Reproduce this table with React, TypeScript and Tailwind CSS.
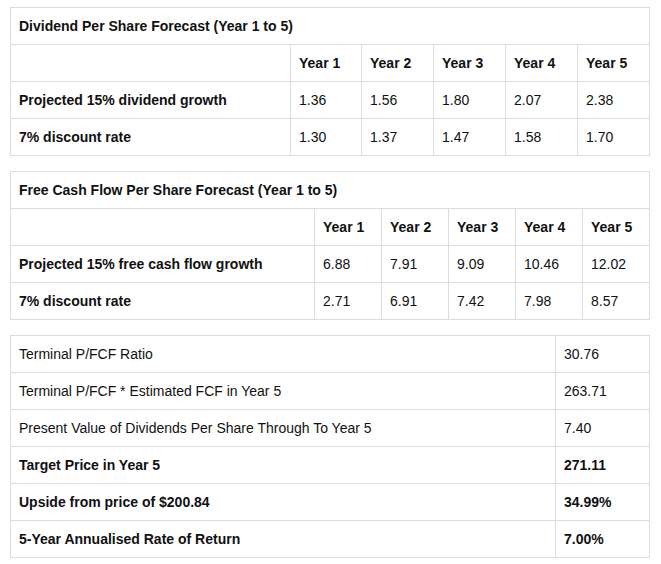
import React from 'react'

const dividendRows = [
  { label: 'Projected 15% dividend growth', values: ['1.36', '1.56', '1.80', '2.07', '2.38'] },
  { label: '7% discount rate', values: ['1.30', '1.37', '1.47', '1.58', '1.70'] },
]

const fcfRows = [
  { label: 'Projected 15% free cash flow growth', values: ['6.88', '7.91', '9.09', '10.46', '12.02'] },
  { label: '7% discount rate', values: ['2.71', '6.91', '7.42', '7.98', '8.57'] },
]

const summaryRows = [
  { label: 'Terminal P/FCF Ratio', value: '30.76', bold: false },
  { label: 'Terminal P/FCF * Estimated FCF in Year 5', value: '263.71', bold: false },
  { label: 'Present Value of Dividends Per Share Through To Year 5', value: '7.40', bold: false },
  { label: 'Target Price in Year 5', value: '271.11', bold: true },
  { label: 'Upside from price of $200.84', value: '34.99%', bold: true },
  { label: '5-Year Annualised Rate of Return', value: '7.00%', bold: true },
]

const years = ['Year 1', 'Year 2', 'Year 3', 'Year 4', 'Year 5']

const cell = 'border border-[#dddddd] px-2 py-2 text-left align-middle'

function ForecastTable({
  title,
  rows,
  labelWidth,
  colWidths,
}: {
  title: string
  rows: { label: string; values: string[] }[]
  labelWidth: string
  colWidths: string[]
}) {
  return (
    <table className="table-fixed border-collapse w-[639px] mb-[15px]">
      <colgroup>
        <col className={labelWidth} />
        {colWidths.map((w, i) => (
          <col key={i} className={w} />
        ))}
      </colgroup>
      <tbody>
        <tr>
          <td colSpan={6} className={cell + ' font-bold'}>
            {title}
          </td>
        </tr>
        <tr>
          <td className={cell}></td>
          {years.map((y) => (
            <td key={y} className={cell + ' font-bold'}>
              {y}
            </td>
          ))}
        </tr>
        {rows.map((r) => (
          <tr key={r.label}>
            <td className={cell + ' font-bold'}>{r.label}</td>
            {r.values.map((v, i) => (
              <td key={i} className={cell}>
                {v}
              </td>
            ))}
          </tr>
        ))}
      </tbody>
    </table>
  )
}

export default function App() {
  return (
    <div
      className="bg-white text-[#111111] text-sm leading-5 pl-[10px] pt-[7px] min-h-screen"
      style={{ fontFamily: '"Liberation Sans", Arial, sans-serif' }}
    >
      <ForecastTable
        title="Dividend Per Share Forecast (Year 1 to 5)"
        rows={dividendRows}
        labelWidth="w-[280px]"
        colWidths={['w-[71px]', 'w-[72px]', 'w-[72px]', 'w-[72px]', 'w-[72px]']}
      />
      <ForecastTable
        title="Free Cash Flow Per Share Forecast (Year 1 to 5)"
        rows={fcfRows}
        labelWidth="w-[304px]"
        colWidths={['w-[67px]', 'w-[67px]', 'w-[67px]', 'w-[67px]', 'w-[67px]']}
      />
      <table className="table-fixed border-collapse w-[639px]">
        <colgroup>
          <col className="w-[545px]" />
          <col className="w-[94px]" />
        </colgroup>
        <tbody>
          {summaryRows.map((r) => (
            <tr key={r.label}>
              <td className={cell + (r.bold ? ' font-bold' : '')}>{r.label}</td>
              <td className={cell + (r.bold ? ' font-bold' : '')}>{r.value}</td>
            </tr>
          ))}
        </tbody>
      </table>
    </div>
  )
}
